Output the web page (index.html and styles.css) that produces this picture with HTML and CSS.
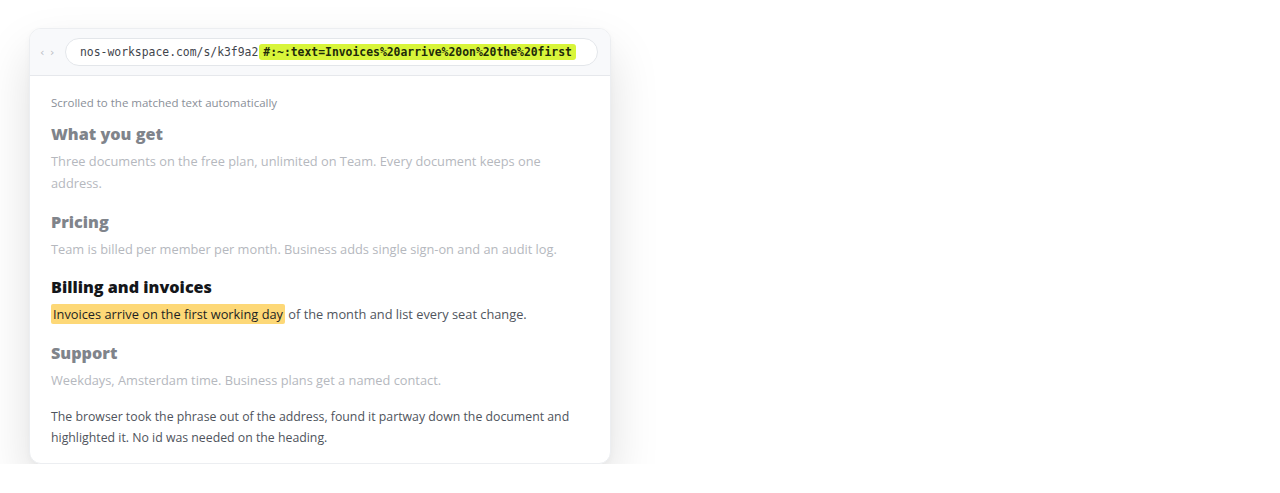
FILE: index.html
```html
<!DOCTYPE html>
<html lang="en">
<head>
<meta charset="utf-8">
<title>Text fragment</title>
<link rel="stylesheet" href="styles.css">
</head>
<body>
<div class="card">
  <div class="bar">
    <span class="nav">&lsaquo; &rsaquo;</span>
    <div class="url"><span class="base">nos-workspace.com/s/k3f9a2</span><span class="frag">#:~:text=Invoices%20arrive%20on%20the%20first</span></div>
  </div>
  <div class="doc">
    <p class="note">Scrolled to the matched text automatically</p>
    <section class="sec dim">
      <h2>What you get</h2>
      <p>Three documents on the free plan, unlimited on Team. Every document keeps one address.</p>
    </section>
    <section class="sec dim">
      <h2>Pricing</h2>
      <p>Team is billed per member per month. Business adds single sign-on and an audit log.</p>
    </section>
    <section class="sec active">
      <h2>Billing and invoices</h2>
      <p><mark>Invoices arrive on the first working day</mark> of the month and list every seat change.</p>
    </section>
    <section class="sec dim">
      <h2>Support</h2>
      <p>Weekdays, Amsterdam time. Business plans get a named contact.</p>
    </section>
    <p class="explain">The browser took the phrase out of the address, found it partway down the document and highlighted it. No id was needed on the heading.</p>
  </div>
</div>
</body>
</html>
```
FILE: styles.css
```css
* { box-sizing: border-box; }
html, body { margin: 0; padding: 0; background: #fff; }
body {
  font-family: "Open Sans", "Noto Sans", sans-serif;
  padding: 28px 0 0 29px;
}
.card {
  width: 582px;
  height: 436px;
  background: #fff;
  border-radius: 12px;
  border: 1px solid #eceef1;
  box-shadow: 0 24px 50px rgba(0, 0, 0, 0.13), 0 2px 6px rgba(0, 0, 0, 0.03);
  overflow: hidden;
}
.bar {
  height: 47px;
  background: #f8f9fb;
  border-bottom: 1px solid #e6e8ec;
  display: flex;
  align-items: center;
  padding: 0 12px 0 10px;
  gap: 8px;
}
.nav {
  font-family: "DejaVu Sans", sans-serif;
  font-size: 11px;
  color: #b8bcc4;
  letter-spacing: 1px;
  width: 17px;
}
.url {
  flex: 1;
  height: 28px;
  border-radius: 14px;
  background: #fff;
  border: 1px solid #e3e6ea;
  display: flex;
  align-items: center;
  padding-left: 14px;
  font-family: "DejaVu Sans Mono", monospace;
  font-size: 11.4px;
  color: #3f444c;
  white-space: nowrap;
}
.frag {
  background: #d8f53a;
  color: #1d2a0a;
  font-weight: bold;
  border-radius: 3px;
  padding: 1px 4px;
  margin-left: 1px;
}
.doc {
  padding: 19px 22px 0 21px;
}
.note {
  margin: 0 0 12px;
  font-size: 11.5px;
  color: #8a8f98;
}
.sec h2 {
  margin: 0;
  font-size: 16.2px;
  font-weight: 800;
  line-height: 24px;
}
.sec p {
  margin: 4px 0 15.5px;
  font-size: 12.8px;
  line-height: 22px;
}
.dim h2 { color: #80848b; }
.dim p { color: #b5b8be; }
.active h2 { color: #14161a; }
.active p { color: #50555d; }
mark {
  background: #fdd877;
  color: #1d1f23;
  border-radius: 2px;
  padding: 1px 2px;
}
.explain {
  margin: 0;
  font-size: 12.3px;
  line-height: 21px;
  color: #4f545c;
}
```
